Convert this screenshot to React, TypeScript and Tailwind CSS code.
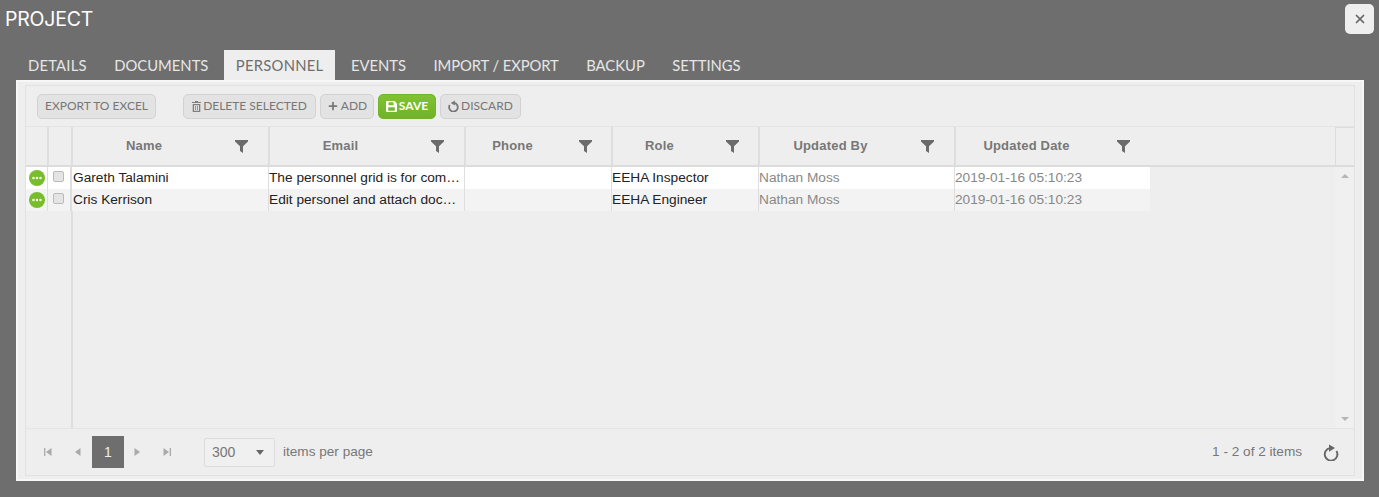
import { X, Plus, Ellipsis } from 'lucide-react'

const TABS = [
  { label: 'DETAILS', cls: 'tracking-[0.2px]' },
  { label: 'DOCUMENTS', cls: '' },
  { label: 'PERSONNEL', cls: 'tracking-[0.25px]' },
  { label: 'EVENTS', cls: '' },
  { label: 'IMPORT / EXPORT', cls: 'tracking-[-0.1px]' },
  { label: 'BACKUP', cls: '' },
  { label: 'SETTINGS', cls: '' },
]

const COLUMNS = [
  { label: 'Name', width: 'w-[197px]', text: 'w-[142px]' },
  { label: 'Email', width: 'w-[196px]', text: 'w-[141px]' },
  { label: 'Phone', width: 'w-[147px]', text: 'w-[93px]' },
  { label: 'Role', width: 'w-[147px]', text: 'w-[93px]' },
  { label: 'Updated By', width: 'w-[196px]', text: 'w-[141px]' },
  { label: 'Updated Date', width: 'w-[195px]', text: 'w-[141px]' },
]

const ROWS = [
  {
    name: 'Gareth Talamini',
    email: 'The personnel grid is for com…',
    role: 'EEHA Inspector',
    bg: 'bg-white',
  },
  {
    name: 'Cris Kerrison',
    email: 'Edit personel and attach doc…',
    role: 'EEHA Engineer',
    bg: 'bg-[#f3f3f3]',
  },
]

const btn =
  'h-[25px] flex items-center gap-[2px] rounded-[5px] border border-[#d2d2d2] bg-[#e3e3e3] text-[12px] text-[#777] [font-family:Lato,sans-serif]'

function FilterIcon() {
  return (
    <svg width="13" height="13" viewBox="0 0 13 13" className="ml-[20px] shrink-0">
      <path d="M0 0h13v1.4L8 6.2V13L5 11V6.2L0 1.4z" fill="#6b6b6b" />
    </svg>
  )
}

function TrashIcon() {
  return (
    <svg width="9" height="11" viewBox="0 0 9 11">
      <path d="M3 0h3v1h3v1H0V1h3zM.7 3h7.6v8H.7zm1.3 1.2v5.6h5V4.2z" fill="#808080" fillRule="evenodd" />
      <path d="M3 5h.8v4H3zM5.2 5H6v4h-.8z" fill="#808080" />
    </svg>
  )
}

function SaveIcon() {
  return (
    <svg width="11" height="11" viewBox="0 0 11 11">
      <path
        d="M1 0h7.5L11 2.5V10a1 1 0 0 1-1 1H1a1 1 0 0 1-1-1V1a1 1 0 0 1 1-1zM2.5 1.3v2.9h5V1.3zM2.2 6.2v3.5h6.6V6.2z"
        fill="#fff"
        fillRule="evenodd"
      />
    </svg>
  )
}

// circular arrow, shared by Discard (mirrored) and the pager refresh
function ArrowCircle({ color, stroke }: { color: string; stroke: number }) {
  return (
    <>
      <path d="M13.5 7.1A6.3 6.3 0 1 1 7 4.1" fill="none" stroke={color} strokeWidth={stroke} />
      <path d="M6 0.5l6 3.6-6 3.6z" fill={color} />
    </>
  )
}

function UndoIcon() {
  return (
    <svg width="11" height="12" viewBox="0 0 16 17" className="-scale-x-100">
      <ArrowCircle color="#777" stroke={2.6} />
    </svg>
  )
}

function RefreshIcon() {
  return (
    <svg width="16" height="17" viewBox="0 0 16 17" className="ml-[21px] mr-[15px]">
      <ArrowCircle color="#666" stroke={1.9} />
    </svg>
  )
}

function PagerIcon({ dir, edge }: { dir: 'l' | 'r'; edge?: boolean }) {
  return (
    <svg width="8" height="8" viewBox="0 0 8 8" className={dir === 'r' ? 'rotate-180' : ''}>
      {edge && <rect x="0" y="0" width="1.3" height="8" fill="#aaa" />}
      <path d="M7.5 0v8L2 4z" fill="#aaa" />
    </svg>
  )
}

export default function App() {
  return (
    <div className="h-[497px] w-[1379px] overflow-hidden bg-[#6e6e6e] [font-family:'Liberation_Sans',sans-serif]">
      {/* Title bar */}
      <div className="flex h-[50px] items-start justify-between pl-[5px] pr-[5px] pt-[4px]">
        <h1 className="mt-[3px] text-[19.5px] leading-[24px] tracking-[-0.2px] text-white [font-family:Inter,sans-serif]">
          PROJECT
        </h1>
        <button className="flex h-[30px] w-[29px] items-center justify-center rounded-[5px] bg-[#efefef] text-[#666]">
          <X size={14} strokeWidth={3} />
        </button>
      </div>

      {/* Tabs */}
      <div className="flex h-[30px] gap-[3.5px] pl-[16px] text-[14.8px] text-[#e6e6e6] [font-family:Lato,sans-serif]">
        {TABS.map((t) => (
          <div
            key={t.label}
            className={
              t.label === 'PERSONNEL'
                ? `flex items-center bg-[#eeeeee] px-[12px] pt-[1px] text-[#6e6e6e] ${t.cls}`
                : `flex items-center px-[12px] pt-[1px] ${t.cls}`
            }
          >
            {t.label}
          </div>
        ))}
      </div>

      {/* Panel */}
      <div className="ml-[16px] h-[401px] w-[1348px] border-[2px] border-[#f7f7f7] bg-[#eeeeee] px-[7px] pt-[3px]">
        <div className="flex h-[391px] flex-col border border-[#e2e2e2]">
          {/* Toolbar */}
          <div className="flex h-[41px] items-center border-b border-[#e4e4e4] pl-[11px]">
            <button className={`${btn} w-[119px] justify-center`}>EXPORT TO EXCEL</button>
            <button className={`${btn} ml-[27px] w-[133px] justify-center`}>
              <TrashIcon />
              DELETE SELECTED
            </button>
            <button className={`${btn} ml-[4px] w-[54px] justify-center`}>
              <Plus size={12} strokeWidth={3.5} />
              ADD
            </button>
            <button className={`${btn} ml-[4px] w-[58px] justify-center !border-[#6fb52b] bg-gradient-to-b from-[#80c232] to-[#70b327] font-bold !text-white`}>
              <SaveIcon />
              SAVE
            </button>
            <button className={`${btn} ml-[4px] w-[81px] justify-center`}>
              <UndoIcon />
              DISCARD
            </button>
          </div>

          {/* Grid header */}
          <div className="flex h-[40px] border-b-2 border-[#dcdcdc]">
            <div className="w-[22px] border-r border-[#dedede]" />
            <div className="w-[24px] border-x border-[#dedede]" />
            {COLUMNS.map((c, i) => (
              <div
                key={c.label}
                className={`${c.width} flex items-center border-l border-[#dedede] ${i < COLUMNS.length - 1 ? 'border-r' : ''}`}
              >
                <span className={`${c.text} text-center text-[13px] font-bold tracking-[0.2px] text-[#777]`}>{c.label}</span>
                <FilterIcon />
              </div>
            ))}
            <div className="ml-auto w-[19px] border-l border-t border-[#dcdcdc]" />
          </div>

          {/* Grid body */}
          <div className="flex h-[262px] border-b border-[#e4e4e4]">
            <div className="relative flex-1">
              {ROWS.map((r) => (
                <div key={r.name} className={`flex h-[22px] w-[1124px] items-center text-[13.7px] ${r.bg}`}>
                  <div className="flex h-full w-[22px] items-center justify-center border-r border-[#dedede]">
                    <span className="flex h-[16px] w-[16px] items-center justify-center rounded-full bg-[#78bd2c] text-white">
                      <Ellipsis size={12} strokeWidth={3} />
                    </span>
                  </div>
                  <div className="flex h-full w-[24px] items-center justify-center border-r-2 border-[#dedede] pb-[3px] pr-[2px]">
                    <span className="h-[11px] w-[11px] rounded-[2px] border border-[#bbb] bg-[#e4e4e4]" />
                  </div>
                  <div className="h-full w-[197px] border-r border-[#dedede] pl-[1px] leading-[22px] text-[#222]">{r.name}</div>
                  <div className="h-full w-[196px] border-r border-[#dedede] leading-[22px] text-[#222]">{r.email}</div>
                  <div className="h-full w-[147px] border-r border-[#dedede]" />
                  <div className="h-full w-[147px] border-r border-[#dedede] leading-[22px] text-[#222]">{r.role}</div>
                  <div className="h-full w-[196px] border-r border-[#dedede] leading-[22px] text-[#888]">Nathan Moss</div>
                  <div className="h-full w-[195px] leading-[22px] text-[#888]">2019-01-16 05:10:23</div>
                </div>
              ))}
              {/* Column line continues below the rows */}
              <div className="absolute bottom-0 left-[45px] top-[44px] w-[2px] bg-[#dedede]" />
            </div>
            <div className="flex w-[19px] flex-col items-center justify-between bg-[#f0f0f0] py-[7px]">
              <span className="border-x-[4px] border-b-[4px] border-x-transparent border-b-[#b5b5b5]" />
              <span className="border-x-[4px] border-t-[4px] border-x-transparent border-t-[#b5b5b5]" />
            </div>
          </div>

          {/* Pager */}
          <div className="flex flex-1 items-center text-[13.6px] text-[#777]">
            <div className="ml-[12px] flex w-[20px] justify-center"><PagerIcon dir="l" edge /></div>
            <div className="ml-[9px] flex w-[20px] justify-center"><PagerIcon dir="l" /></div>
            <div className="ml-[5px] flex h-[32px] w-[32px] items-center justify-center bg-[#6e6e6e] text-[14px] text-[#eee]">1</div>
            <div className="ml-[4px] flex w-[20px] justify-center"><PagerIcon dir="r" /></div>
            <div className="ml-[9px] flex w-[20px] justify-center"><PagerIcon dir="r" edge /></div>
            <div className="ml-[27px] flex h-[29px] w-[71px] items-center justify-between rounded-[2px] border border-[#dcdcdc] bg-[#f0f0f0] pl-[7px] pr-[10px] text-[14px]">
              300
              <span className="border-x-[4px] border-t-[5px] border-x-transparent border-t-[#666]" />
            </div>
            <span className="ml-[8px]">items per page</span>
            <span className="ml-auto">1 - 2 of 2 items</span>
            <RefreshIcon />
          </div>
        </div>
      </div>
    </div>
  )
}
